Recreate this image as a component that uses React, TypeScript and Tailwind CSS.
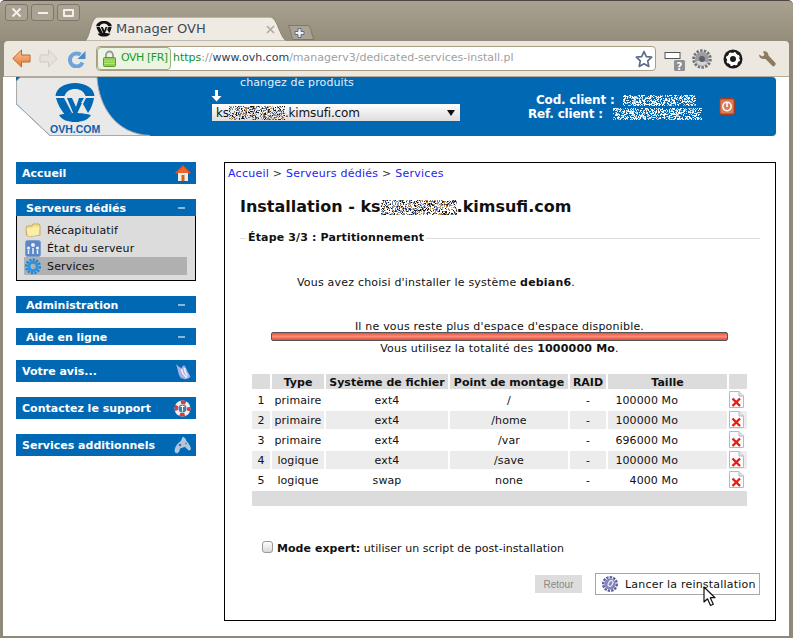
import type { ReactNode } from 'react'

// pixelated censor noise, seeded so the picture is stable
function Noise({ w, h, colors, seed = 7, density = 0.55 }: { w: number; h: number; colors: string[]; seed?: number; density?: number }) {
  let s = seed * 2654435
  const next = () => {
    s = (s + 0x6d2b79f5) | 0
    let t = Math.imul(s ^ (s >>> 15), 1 | s)
    t = (t + Math.imul(t ^ (t >>> 7), 61 | t)) ^ t
    return ((t ^ (t >>> 14)) >>> 0) / 4294967296
  }
  const cells: ReactNode[] = []
  for (let y = 0; y < h; y++) {
    for (let x = 0; x < w; x++) {
      if (next() < density) {
        cells.push(<rect key={`${x}-${y}`} x={x} y={y} width={1} height={1} fill={colors[Math.floor(next() * colors.length)]} />)
      }
    }
  }
  return (
    <svg width={w} height={h} className="inline-block align-middle shrink-0">
      {cells}
    </svg>
  )
}

function OvhMark({ color }: { color: string }) {
  return (
    <g fill={color}>
      <path d="M0.5 13C1 5 10 0 20 0s19 5 19.5 13h-9C29 8.500 25 6 20 6s-9 2.500-10.500 7z" />
      <path d="M1 15h8l8 15-7 2C6 27 2.500 21 1 15z" />
      <path d="M39 15h-8l-3 6 5 9c3-4 5-10 6-15z" />
      <path d="M12 15h5l4 9 3-9h5l-3 5 1 0-6 13-2-1z" />
      <path d="M4 32c3-1 10-2 16-2s13 1 16 2c-3 5-9 7-16 7S7 37 4 32z" />
    </g>
  )
}

function Favicon() {
  return (
    <svg width="16" height="16" viewBox="0 0 40 40" className="shrink-0">
      <OvhMark color="#111111" />
    </svg>
  )
}

function BannerLogo() {
  return (
    <svg width="134" height="59" viewBox="0 0 134 59" className="shrink-0">
      <path d="M0 27L34 59H0z" fill="#ffffff" />
      <path d="M4 0.500H81C83 30 100 57 134 58.500H34L0.500 27V4z" fill="#e9e9ea" stroke="#a9a9a9" />
      <g transform="translate(39 6)">
        <OvhMark color="#0168b3" />
      </g>
      <text x="34" y="56" fill="#0a5ea8" fontFamily="Liberation Sans" fontWeight="700" fontSize="10.500">OVH.COM</text>
    </svg>
  )
}

function WinButton({ children }: { children: ReactNode }) {
  return (
    <div className="flex h-[17px] w-[23px] items-center justify-center rounded-[3px] border border-[#7d7869] bg-[#aaa393]">
      {children}
    </div>
  )
}

function BackArrow() {
  return (
    <svg width="19" height="19" viewBox="0 0 19 19">
      <defs>
        <linearGradient id="bk" x1="0" y1="0" x2="0" y2="1">
          <stop offset="0" stopColor="#f9c69a" />
          <stop offset="1" stopColor="#e8772c" />
        </linearGradient>
      </defs>
      <path d="M0.800 9.500L9.500 1v5h8.500v7H9.500v5z" fill="url(#bk)" stroke="#b8683a" strokeLinejoin="round" />
    </svg>
  )
}

function ForwardArrow() {
  return (
    <svg width="19" height="19" viewBox="0 0 19 19">
      <path d="M18.200 9.500L9.500 1v5H1v7h8.500v5z" fill="#e6e2da" stroke="#cfcbc2" strokeLinejoin="round" />
    </svg>
  )
}

function Reload() {
  return (
    <svg width="18" height="18" viewBox="0 0 18 18">
      <path d="M14.500 12.500A6.500 6.500 0 1 1 9 3.500c1.500 0 2.500.4 3.500 1.100" fill="none" stroke="#6aa6dc" strokeWidth="4" />
      <path d="M17.500 1v8h-8z" fill="#4a8ccb" />
    </svg>
  )
}

function Lock() {
  return (
    <svg width="13" height="17" viewBox="0 0 13 17" className="shrink-0">
      <path d="M3 8V5a3.500 3.500 0 0 1 7 0v3" fill="none" stroke="#9a9a9a" strokeWidth="1.800" />
      <rect x="0.500" y="7.500" width="12" height="9" rx="1" fill="#8fd14f" stroke="#5c9c2c" />
      <path d="M1 11h11M1 13.500h11" stroke="#b5e388" />
    </svg>
  )
}

function Star() {
  return (
    <svg width="18" height="18" viewBox="0 0 18 18">
      <path d="M9 1.500l2.300 5.100 5.400.6-4 3.700 1.100 5.500L9 13.700l-4.800 2.700 1.100-5.500-4-3.700 5.400-.6z" fill="#ffffff" stroke="#5c6c8a" strokeWidth="1.700" strokeLinejoin="round" />
    </svg>
  )
}

function HelpExt() {
  return (
    <svg width="22" height="24" viewBox="0 0 22 24">
      <rect x="1" y="5.500" width="15" height="6" fill="#ffffff" stroke="#555555" />
      <rect x="10" y="13" width="11" height="11" rx="1.500" fill="#8f8f8f" />
      <text x="12.500" y="22.500" fontSize="10" fontWeight="700" fill="#ffffff" fontFamily="DejaVu Sans">?</text>
    </svg>
  )
}

function GrayGear() {
  return (
    <svg width="20" height="20" viewBox="0 0 20 20">
      <circle cx="10" cy="10" r="8.300" fill="none" stroke="#70737a" strokeWidth="3" strokeDasharray="2.400 1.300" />
      <circle cx="10" cy="10" r="7" fill="#9a9ca2" />
      <path d="M4 13a7 7 0 0 0 12 0c-3 1-8-3-12 0z" fill="#d4d4d8" />
      <circle cx="10" cy="10" r="3" fill="#5f6168" />
    </svg>
  )
}

function BlackGear() {
  return (
    <svg width="20" height="20" viewBox="0 0 20 20">
      <circle cx="10" cy="10" r="9.500" fill="#1a1a1a" />
      <circle cx="10" cy="10" r="4.600" fill="none" stroke="#ffffff" strokeWidth="3.200" />
      <circle cx="10" cy="10" r="6.200" fill="none" stroke="#ffffff" strokeWidth="1.600" strokeDasharray="2.400 2.470" />
    </svg>
  )
}

function Wrench() {
  return (
    <svg width="18" height="18" viewBox="0 0 18 18">
      <path d="M1 4.500L4.500 6.500 6.500 5 5 1.500C8 .5 10.500 2.500 10.500 5.500L17.500 13c.6 1-.5 3.500-2.500 3.500L7.500 9C4 9.500 1 8 1 4.500z" fill="#8b7b5f" />
    </svg>
  )
}

function PowerButton() {
  return (
    <svg width="16" height="17" viewBox="0 0 16 17" className="shrink-0">
      <rect x="0.500" y="0.500" width="15" height="16" rx="2" fill="#c9603a" stroke="#a83a20" />
      <rect x="2" y="2" width="12" height="13" rx="1.500" fill="#d98058" />
      <circle cx="8" cy="8.500" r="4.200" fill="none" stroke="#ffffff" strokeWidth="1.500" />
      <path d="M8 5v4" stroke="#ffffff" strokeWidth="1.500" />
    </svg>
  )
}

function HouseIcon() {
  return (
    <svg width="16" height="16" viewBox="0 0 16 16" className="shrink-0">
      <rect x="3" y="7" width="10" height="9" fill="#f2ece2" />
      <path d="M0 8L8 0l8 8-1.500 1L8 3.500 1.500 9z" fill="#e8501c" />
      <path d="M3 7l5-5 5 5v1H3z" fill="#f0662a" />
      <rect x="6.500" y="10" width="3" height="6" fill="#c9682a" />
    </svg>
  )
}

function FolderIcon() {
  return (
    <svg width="16" height="16" viewBox="0 0 16 16" className="shrink-0">
      <path d="M1 6l1-2h5l1-2 6 0 1 2v9l-11 1.500L1.500 13z" fill="#f6e08c" stroke="#b89c4c" strokeWidth="0.800" />
      <path d="M1.500 7l11-2 2 0-1 8-10 1.500z" fill="#fbeeaa" />
    </svg>
  )
}

function StatusIcon() {
  return (
    <svg width="16" height="17" viewBox="0 0 16 17" className="shrink-0">
      <rect x="0.500" y="0.500" width="15" height="16" rx="2" fill="#5b86c8" stroke="#7f9fcf" />
      <circle cx="8" cy="5" r="2" fill="#eaf1fb" />
      <circle cx="3.500" cy="8" r="1.600" fill="#eaf1fb" />
      <circle cx="12.500" cy="8" r="1.600" fill="#eaf1fb" />
      <path d="M3.500 10v4M8 8v6M12.500 10v4" stroke="#eaf1fb" strokeWidth="1.500" />
    </svg>
  )
}

function BlueGear() {
  return (
    <svg width="16" height="17" viewBox="0 0 16 17" className="shrink-0">
      <circle cx="8" cy="8.500" r="6.800" fill="none" stroke="#1f86d6" strokeWidth="2.400" strokeDasharray="2.300 1.200" />
      <circle cx="8" cy="8.500" r="4.200" fill="none" stroke="#2a93e0" strokeWidth="3" />
    </svg>
  )
}

function FeatherIcon() {
  return (
    <svg width="16" height="17" viewBox="0 0 16 17" className="shrink-0">
      <path d="M1 1C3 3.500 5 4 6.500 5.500 7.500 2 9.500 1.500 10.500 4c1.500 3.500 3.500 7 5 9.500-2 3-7 3.500-9.500 1.500C3 12 3 6 1 1z" fill="#a8b2e2" />
      <path d="M6.500 6c.5 3.500 2 6.500 5.500 8.500M9.500 5c0 3 1 5.500 3 7.500" stroke="#eef0fb" strokeWidth="1.500" fill="none" />
    </svg>
  )
}

function BuoyIcon() {
  return (
    <svg width="17" height="17" viewBox="0 0 17 17" className="shrink-0">
      <circle cx="8.500" cy="8.500" r="8" fill="#f3f1ef" />
      <circle cx="8.500" cy="8.500" r="6.300" fill="none" stroke="#e23a3a" strokeWidth="3.400" strokeDasharray="5 4.900" strokeDashoffset="2.500" />
      <circle cx="8.500" cy="8.500" r="4" fill="#3f7fa8" />
      <path d="M8.500 5.500v6M6.500 6.500l4 0" stroke="#ffffff" />
    </svg>
  )
}

function PadIcon() {
  return (
    <svg width="17" height="18" viewBox="0 0 17 18" className="shrink-0">
      <path d="M9 1l2 1.500 1 2.500c2 1.500 4 5 4.500 7.500.2 1.500-1.500 2-2.500 1L11 10.500 6 12l-1.500 4c-1 1.500-3.500 1-3.500-1 0-4 3-8 6-9.500z" fill="#b4c4dc" stroke="#e4ecf6" strokeWidth="0.500" />
      <circle cx="12" cy="7.500" r="1" fill="#5f9e6a" />
      <circle cx="6" cy="9" r="1.300" fill="#4c6ea0" />
    </svg>
  )
}

function DeleteIcon() {
  return (
    <svg width="15" height="17" viewBox="0 0 15 17" className="block">
      <path d="M0.500 0.500H10L14.500 5V16.500H0.500z" fill="#fbfbfd" stroke="#b4b8c4" />
      <path d="M10 0.500V5h4.500" fill="#e2e4ec" stroke="#b4b8c4" />
      <path d="M3.500 7.500l7.500 7.500M11 7.500l-7.500 7.500" stroke="#e81c10" strokeWidth="2.400" />
    </svg>
  )
}

function ButtonGear() {
  return (
    <svg width="16" height="16" viewBox="0 0 16 16" className="shrink-0">
      <circle cx="8" cy="8" r="6.800" fill="none" stroke="#5e5e9c" strokeWidth="2.400" strokeDasharray="2.400 1.100" />
      <circle cx="8" cy="8" r="5.600" fill="#8484bc" />
      <ellipse cx="8.500" cy="7.500" rx="2" ry="3.200" transform="rotate(30 8.500 7.500)" fill="none" stroke="#e4e4f4" strokeWidth="1.300" />
    </svg>
  )
}

function Cursor() {
  return (
    <svg width="14" height="21" viewBox="0 0 14 21" className="absolute left-[107px] top-[12px]">
      <path d="M1 1v15l3.500-3.200L7.500 19.500l2.800-1.300-3-6.500H12z" fill="#ffffff" stroke="#111111" strokeWidth="1.200" strokeLinejoin="round" />
    </svg>
  )
}

function NavBar({ label, icon }: { label: string; icon: ReactNode }) {
  return (
    <div className="flex h-[22px] items-center justify-between bg-[#0168b3] pl-[6px] pr-[5px] text-[11px] font-bold text-white">
      <span className="pt-[2px]">{label}</span>
      {icon}
    </div>
  )
}

function SectionBar({ label }: { label: string }) {
  return (
    <div className="flex h-[17px] items-center justify-between bg-[#0168b3] pl-[10px] pr-[11px] text-[11px] font-bold text-white">
      <span className="pt-[3px] leading-[14px]">{label}</span>
      <span className="h-[2px] w-[7px] bg-[#8ab8dc]" />
    </div>
  )
}

const partitions = [
  { id: 1, type: 'primaire', fs: 'ext4', mount: '/', raid: '-', size: '100000 Mo' },
  { id: 2, type: 'primaire', fs: 'ext4', mount: '/home', raid: '-', size: '100000 Mo' },
  { id: 3, type: 'primaire', fs: 'ext4', mount: '/var', raid: '-', size: '696000 Mo' },
  { id: 4, type: 'logique', fs: 'ext4', mount: '/save', raid: '-', size: '100000 Mo' },
  { id: 5, type: 'logique', fs: 'swap', mount: 'none', raid: '-', size: '4000 Mo' },
]

const darkNoise = ['#111111', '#333333', '#777777', '#c98a4a', '#5a7fc0', '#bbbbbb']
const whiteNoise = ['#ffffff', '#ffffff', '#ffffff', '#cfe2f2', '#8fbce0']

export default function App() {
  return (
    <div className="flex h-[638px] w-[793px] flex-col overflow-hidden rounded-t-[5px] border-t border-[#4c483f] bg-[#8f8979] font-['DejaVu_Sans',sans-serif] text-[#111111]">
      {/* Title bar with window buttons and the tab */}
      <div className="flex h-[40px] bg-gradient-to-b from-[#aaa291] to-[#958d7b] pl-[5px] pt-[3px]">
        <div className="flex gap-[3px]">
          <WinButton>
            <svg width="11" height="11" viewBox="0 0 11 11"><path d="M1.500 1.500l8 8M9.500 1.500l-8 8" stroke="#f2f0ea" strokeWidth="2" /></svg>
          </WinButton>
          <WinButton><span className="h-[2px] w-[10px] bg-[#f2f0ea]" /></WinButton>
          <WinButton><span className="h-[8px] w-[11px] rounded-[1px] border-2 border-[#f2f0ea]" /></WinButton>
        </div>
        <div className="relative ml-[4px] mt-[13px] flex h-[24px] w-[204px] items-center pl-[12px]">
          <svg width="204" height="24" viewBox="0 0 204 24" className="absolute left-0 top-0">
            <path d="M0 24C6 24 6 0 14 0H186C194 0 196 24 204 24z" fill="#efebe3" stroke="#8a8474" />
          </svg>
          <div className="relative flex items-center gap-[4px] text-[13px] text-[#3d4859]">
            <Favicon />
            <span>Manager OVH</span>
          </div>
          <svg width="9" height="9" viewBox="0 0 9 9" className="absolute left-[182px] top-[8px]"><path d="M1 1l7 7M8 1l-7 7" stroke="#aeaaa2" strokeWidth="1.600" /></svg>
        </div>
        <svg width="27" height="15" viewBox="0 0 27 15" className="mt-[21px] shrink-0">
          <path d="M0 0.500H20C23 0.500 24 12 26 14.500H5C3 12 3 3 0 0.500z" fill="#aaa393" stroke="#7d7869" />
          <path d="M10 3.500h3v3h3v3h-3v3h-3v-3H7v-3h3z" fill="#f4f2ee" stroke="#5c6c8a" />
        </svg>
      </div>

      {/* Toolbar */}
      <div className="ml-[4px] mr-[4px] flex h-[36px] items-center rounded-t-[4px] border-b border-[#b3ada0] bg-[#ece8e0] pl-[8px]">
        <BackArrow />
        <div className="ml-[8px]"><ForwardArrow /></div>
        <div className="ml-[10px]"><Reload /></div>
        <div className="ml-[10px] flex h-[25px] w-[560px] items-center rounded-[4px] border border-[#a89d83] bg-white text-[11px]">
          <div className="flex h-[23px] w-[74px] items-center gap-[5px] rounded-[4px] border border-[#8fb47f] bg-[#ecf5e4] pl-[5px] tracking-[-0.45px] text-[#1f9a1f]">
            <Lock />
            <span>OVH [FR]</span>
          </div>
          <div className="ml-[2px] flex-1 whitespace-nowrap">
            <span className="text-[#12901a]">https</span>
            <span className="text-[#9a9a9a]">://</span>
            <span className="text-[#2c3e50]">www.ovh.com</span>
            <span className="text-[#a0a0a0]">/managerv3/dedicated-services-install.pl</span>
          </div>
          <div className="mr-[2px]"><Star /></div>
        </div>
        <div className="ml-[8px]"><HelpExt /></div>
        <div className="ml-[6px]"><GrayGear /></div>
        <div className="ml-[11px]"><BlackGear /></div>
        <div className="ml-[15px]"><Wrench /></div>
      </div>

      {/* Page */}
      <div className="mb-[2px] ml-[3px] mr-[4px] flex-1 bg-white pl-[13px]">
        {/* Header banner */}
        <div className="flex h-[59px] w-[760px] overflow-hidden rounded-r-[4px] bg-[#0168b3] text-white">
          <BannerLogo />
          <div className="ml-[62px] w-[248px] shrink-0">
            <div className="ml-[28px] h-[12px] text-[11px] leading-[12px] tracking-[0.1px] text-[#e4eef7]">changez de produits</div>
            <svg width="11" height="12" viewBox="0 0 11 12" className="ml-[-1px] mt-[1px]"><path d="M4 0h3v6h3.500L5.500 11.500.5 6H4z" fill="#ffffff" /></svg>
            <div className="mt-[2px] flex h-[17px] items-center justify-between bg-gradient-to-b from-[#ffffff] to-[#dddddd] pl-[4px] pr-[5px] text-[12px] tracking-[-0.15px] text-[#111111]">
              <span className="flex items-center">ks<Noise w={56} h={14} colors={darkNoise} seed={3} />.kimsufi.com</span>
              <span className="h-0 w-0 border-x-[4px] border-t-[6px] border-x-transparent border-t-[#111111]" />
            </div>
          </div>
          <div className="ml-[68px] mt-[16px] w-[180px] shrink-0 whitespace-nowrap text-[12px] font-bold leading-[14px] tracking-[-0.2px]">
            <div className="flex items-center pl-[8px]">
              <span>Cod. client :</span>
              <span className="ml-[8px] flex"><Noise w={73} h={11} colors={whiteNoise} seed={11} /></span>
            </div>
            <div className="flex items-center">
              <span>Ref. client :</span>
              <span className="ml-[10px] flex"><Noise w={89} h={12} colors={whiteNoise} seed={17} /></span>
            </div>
          </div>
          <div className="ml-[11px] mt-[21px]"><PowerButton /></div>
        </div>

        <div className="mt-[26px] flex gap-[28px]">
          {/* Sidebar */}
          <div className="flex w-[180px] shrink-0 flex-col gap-[15px]">
            <NavBar label="Accueil" icon={<HouseIcon />} />
            <div>
              <SectionBar label="Serveurs dédiés" />
              <div className="flex flex-col border-x border-b border-black bg-[#dcdcdc] pb-[5px] pl-[7px] pr-[8px] pt-[5px] text-[11px] tracking-[0.15px]">
                <div className="flex h-[18px] items-center gap-[6px] pl-[1px]"><FolderIcon /><span className="pt-[2px]">Récapitulatif</span></div>
                <div className="flex h-[18px] items-center gap-[6px] pl-[1px]"><StatusIcon /><span className="pt-[2px]">État du serveur</span></div>
                <div className="flex h-[18px] items-center gap-[6px] bg-[#b0b0b0] pl-[1px]"><BlueGear /><span className="pt-[2px]">Services</span></div>
              </div>
            </div>
            <SectionBar label="Administration" />
            <SectionBar label="Aide en ligne" />
            <NavBar label="Votre avis..." icon={<FeatherIcon />} />
            <NavBar label="Contactez le support" icon={<BuoyIcon />} />
            <NavBar label="Services additionnels" icon={<PadIcon />} />
          </div>

          {/* Main panel */}
          <div className="h-[459px] w-[552px] shrink-0 border border-black text-[11px]">
            <div className="h-[20px] pl-[3px] text-[11px] leading-[22px] tracking-[0.25px] text-[#2222ee]">
              Accueil <span className="text-[#333333]">&gt;</span> Serveurs dédiés <span className="text-[#333333]">&gt;</span> Services
            </div>
            <h1 className="mt-[11px] flex h-[24px] items-center pl-[15px] pt-[2px] text-[16px] font-bold">
              Installation - ks<Noise w={76} h={15} colors={darkNoise} seed={23} />.kimsufi.com
            </h1>
            <div className="mt-[13px] ml-[15px] flex h-[14px] w-[520px] items-center text-[11px] font-bold">
              <span className="h-px w-[6px] bg-[#dddddd]" />
              <span className="mx-[2px] tracking-[0.15px]">Étape 3/3 : Partitionnement</span>
              <span className="h-px flex-1 bg-[#dddddd]" />
            </div>
            <p className="mt-[30px] h-[14px] pl-[72px] leading-[16px] tracking-[0.2px]">
              Vous avez choisi d'installer le système <b>debian6</b>.
            </p>
            <p className="ml-[46px] mt-[30px] h-[13px] w-[457px] text-center leading-[15px] tracking-[0.2px]">Il ne vous reste plus d'espace d'espace disponible.</p>
            <div className="ml-[46px] h-[9px] w-[457px] rounded-[2px] border border-[#555555] bg-gradient-to-b from-[#e8503c] via-[#ff8a78] to-[#e04a38]" />
            <p className="ml-[46px] h-[14px] w-[457px] text-center leading-[16px] tracking-[0.2px]">
              Vous utilisez la totalité des <b>1000000 Mo</b>.
            </p>

            <table className="ml-[25px] mt-[17px] w-[499px] table-fixed border-separate border-spacing-[2px] text-center text-[11px]">
              <colgroup>
                <col className="w-[18px]" />
                <col className="w-[52px]" />
                <col className="w-[122px]" />
                <col className="w-[118px]" />
                <col className="w-[36px]" />
                <col className="w-[119px]" />
                <col className="w-[18px]" />
              </colgroup>
              <thead>
                <tr className="h-[15px] bg-[#dcdcdc] font-bold leading-[13px]">
                  <th className="p-0" />
                  <th className="p-0 pt-[2px]">Type</th>
                  <th className="whitespace-nowrap p-0 pt-[2px]">Système de fichier</th>
                  <th className="whitespace-nowrap p-0 pt-[2px]">Point de montage</th>
                  <th className="p-0 pt-[2px]">RAID</th>
                  <th className="p-0 pt-[2px]">Taille</th>
                  <th className="p-0" />
                </tr>
              </thead>
              <tbody>
                {partitions.map(p => (
                  <tr key={p.id} className={p.id % 2 === 0 ? 'h-[18px] bg-[#ececec] leading-[14px] tracking-[0.1px]' : 'h-[18px] bg-white leading-[14px] tracking-[0.1px]'}>
                    <td className="p-0 pt-[2px]">{p.id}</td>
                    <td className="p-0 pt-[2px]">{p.type}</td>
                    <td className="p-0 pt-[2px]">{p.fs}</td>
                    <td className="p-0 pt-[2px]">{p.mount}</td>
                    <td className="p-0 pt-[2px]">{p.raid}</td>
                    <td className="p-0 pr-[49px] pt-[2px] text-right whitespace-nowrap">{p.size}</td>
                    <td className="p-0 align-top">
                      <DeleteIcon />
                    </td>
                  </tr>
                ))}
                <tr className="h-[15px] bg-[#dcdcdc]">
                  <td colSpan={7} className="p-0" />
                </tr>
              </tbody>
            </table>

            <label className="ml-[37px] mt-[33px] flex h-[14px] items-center">
              <span className="-mt-[2px] h-[12px] w-[11px] rounded-[3px] border border-[#9a9a9a] bg-gradient-to-b from-[#ffffff] to-[#d8d8d8]" />
              <span className="ml-[4px] pt-[2px] tracking-[0.05px]"><b>Mode expert:</b> utiliser un script de post-installation</span>
            </label>

            <div className="mt-[18px] flex items-center justify-end gap-[13px] pr-[15px]">
              <div className="flex h-[18px] w-[47px] items-center justify-center bg-[#dddddd] font-['Liberation_Sans',sans-serif] text-[10px] text-[#888888]">Retour</div>
              <div className="relative flex h-[22px] w-[165px] items-center gap-[7px] border border-[#a8a8a8] pl-[6px] text-[11px] tracking-[0.2px]">
                <ButtonGear />
                <span className="pt-[2px]">Lancer la reinstallation</span>
                <Cursor />
              </div>
            </div>
          </div>
        </div>
      </div>
    </div>
  )
}
